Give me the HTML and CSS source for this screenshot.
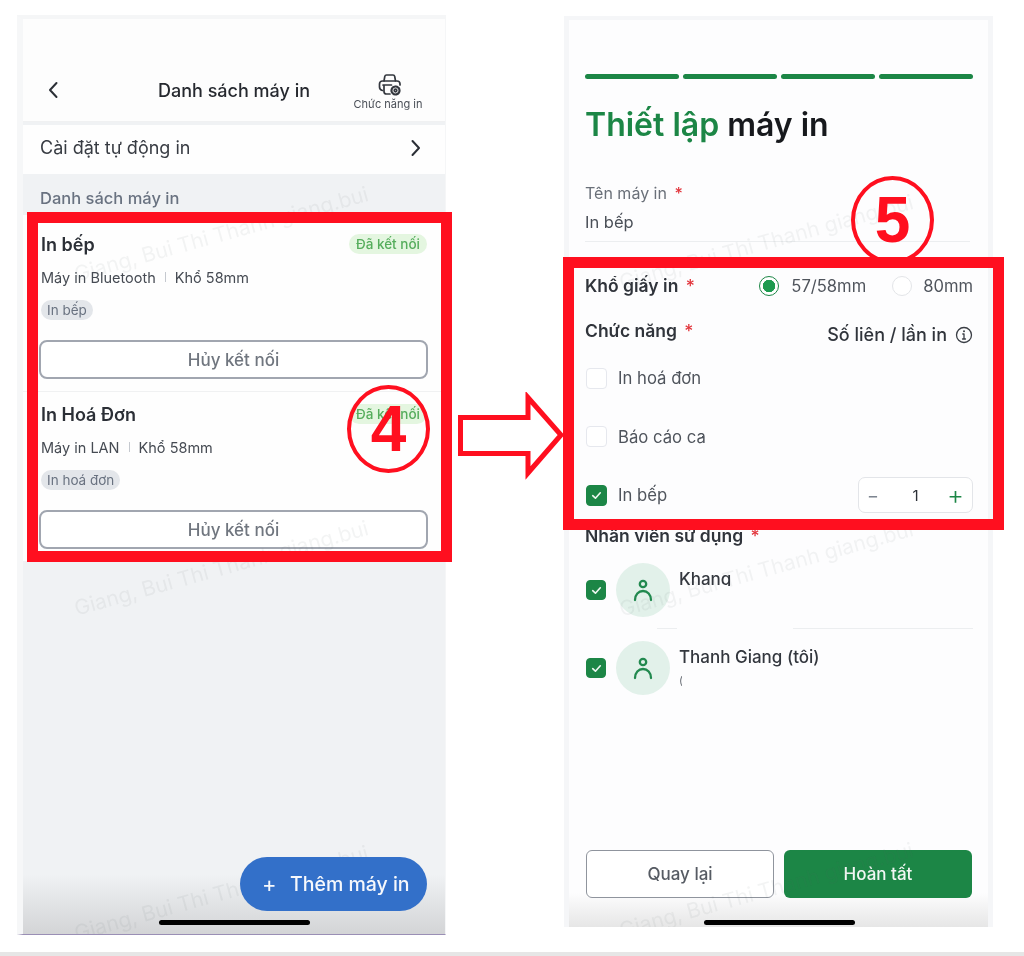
FILE: index.html
```html
<!DOCTYPE html>
<html lang="vi">
<head>
<meta charset="utf-8">
<title>Thiết lập máy in</title>
<link rel="stylesheet" href="styles.css">
</head>
<body>
<main class="stage">
  <section class="phone phone-left">
    <header class="topbar">
      <svg class="back" viewBox="0 0 12 18"><path d="M9.5 2 3 9l6.5 7"/></svg>
      <h1 class="topbar-title">Danh sách máy in</h1>
      <div class="topbar-action">
        <svg class="printer" viewBox="0 0 24 24"><path d="M6 8 6.800 3.400C7 2.500 7.600 2 8.500 2h6.500c.9 0 1.500.5 1.700 1.400L17.500 8"/><path d="M4.500 17.500C2.700 17 1.500 15.800 1.500 14v-3C1.500 9.200 2.700 8 4.500 8h14.500c1.800 0 3 1.200 3 3v1"/><path d="M5 12h8.500M6 12v6.500C6 20.200 7 21 8.500 21H12"/><circle cx="17.500" cy="17.500" r="4" class="gear"/><circle cx="17.500" cy="17.500" r="1.300"/></svg>
        <span>Chức năng in</span>
      </div>
    </header>
    <div class="auto-row">
      <span>Cài đặt tự động in</span>
      <svg class="next" viewBox="0 0 12 18"><path d="M2.500 2 9 9l-6.500 7"/></svg>
    </div>
    <div class="list-label">Danh sách máy in</div>
    <div class="cards">
      <article class="card card-line">
        <div class="card-head"><h2>In bếp</h2><span class="badge">Đã kết nối</span></div>
        <p class="meta"><span>Máy in Bluetooth</span><i></i><span>Khổ 58mm</span></p>
        <span class="pill">In bếp</span>
        <button class="btn-disconnect">Hủy kết nối</button>
      </article>
      <article class="card">
        <div class="card-head"><h2>In Hoá Đơn</h2><span class="badge">Đã kết nối</span></div>
        <p class="meta"><span>Máy in LAN</span><i></i><span>Khổ 58mm</span></p>
        <span class="pill">In hoá đơn</span>
        <button class="btn-disconnect">Hủy kết nối</button>
      </article>
    </div>
    <div class="shade shade-left"></div>
    <span class="mark mark-l1">Giang, Bui Thi Thanh giang.bui</span>
    <span class="mark mark-l2">Giang, Bui Thi Thanh giang.bui</span>
    <span class="mark mark-l3">Giang, Bui Thi Thanh giang.bui</span>
    <button class="fab"><span class="fab-plus">+</span>Thêm máy in</button>
    <div class="home home-left"></div>
  </section>

  <section class="phone phone-right">
    <div class="form">
      <div class="steps"><b></b><b></b><b></b><b></b></div>
      <h1 class="form-title"><em>Thiết lập</em> máy in</h1>
      <label class="field-label">Tên máy in <u>*</u></label>
      <div class="field-value">In bếp</div>
      <div class="paper-row">
        <span class="strong-label">Khổ giấy in <u>*</u></span>
        <div class="radios">
          <span class="radio radio-on"></span><span class="radio-text">57/58mm</span>
          <span class="radio"></span><span class="radio-text">80mm</span>
        </div>
      </div>
      <div class="func-head">
        <span class="strong-label">Chức năng <u>*</u></span>
        <span class="copies">Số liên / lần in
          <svg class="info" viewBox="0 0 18 18"><circle cx="9" cy="9" r="7.500"/><path d="M9 8v5M7.500 13h3M7.800 8H9"/><circle class="dot" cx="9" cy="5.200" r="1"/></svg>
        </span>
      </div>
      <div class="func-list">
        <div class="func"><span class="check"></span><span>In hoá đơn</span></div>
        <div class="func"><span class="check"></span><span>Báo cáo ca</span></div>
        <div class="func">
          <span class="check check-on"><svg viewBox="0 0 12 12"><path d="M2.500 6.200 5 8.500l4.500-5"/></svg></span>
          <span>In bếp</span>
          <div class="stepper"><span class="minus">−</span><span class="qty">1</span><span class="plus">+</span></div>
        </div>
      </div>
      <div class="strong-label staff-label">Nhân viên sử dụng <u>*</u></div>
      <div class="staff staff-first">
        <span class="check check-on"><svg viewBox="0 0 12 12"><path d="M2.500 6.200 5 8.500l4.500-5"/></svg></span>
        <span class="avatar"><svg viewBox="0 0 24 24"><circle cx="12" cy="6" r="3.200"/><path d="M4 22c0-5.500 3.500-9 8-9s8 3.500 8 9"/></svg></span>
        <div class="staff-body staff-line"><div class="staff-name">Khang</div><div class="patch"></div></div>
      </div>
      <div class="staff">
        <span class="check check-on"><svg viewBox="0 0 12 12"><path d="M2.500 6.200 5 8.500l4.500-5"/></svg></span>
        <span class="avatar"><svg viewBox="0 0 24 24"><circle cx="12" cy="6" r="3.200"/><path d="M4 22c0-5.500 3.500-9 8-9s8 3.500 8 9"/></svg></span>
        <div class="staff-body"><div class="staff-name">Thanh Giang (tôi)</div><div class="staff-sub">(</div></div>
      </div>
    </div>
    <div class="shade shade-right"></div>
    <div class="actions">
      <button class="btn-back">Quay lại</button>
      <button class="btn-done">Hoàn tất</button>
    </div>
    <span class="mark mark-r1">Giang, Bui Thi Thanh giang.bui</span>
    <span class="mark mark-r2">Giang, Bui Thi Thanh giang.bui</span>
    <span class="mark mark-r3">Giang, Bui Thi Thanh giang.bui</span>
    <div class="home home-right"></div>
  </section>

  <div class="circle circle-four">4</div>
  <div class="circle circle-five">5</div>
  <div class="red-box box-four"></div>
  <div class="red-box box-five"></div>
  <svg class="arrow" viewBox="0 0 110 90"><path d="M3.500 25.500H71V5.500L104 43 71 81V61.500H3.500Z"/></svg>
</main>
<footer class="page-foot"></footer>
</body>
</html>
```
FILE: styles.css
```css
* { box-sizing: border-box; }
html, body { margin: 0; padding: 0; }
body { width: 1024px; height: 956px; background: #fff; font-family: Inter, "Noto Sans", sans-serif; color: #2b2f36; overflow: hidden; }
h1, h2, p { margin: 0; }
u { text-decoration: none; color: #e2353c; font-weight: 500; margin-left: 3px; }
em { font-style: normal; }
button { font-family: inherit; cursor: pointer; }

.stage { position: relative; height: 952px; display: flex; align-items: flex-start; }
.page-foot { height: 4px; background: #e6e6e6; }

.phone { position: relative; overflow: hidden; display: flex; flex-direction: column; width: 429px; filter: blur(0.6px); }
.phone-left { margin: 15px 0 0 17px; height: 920px; background: #f0f2f4; border-top: 4px solid #f5f6f7; border-left: 6px solid #f6f7f8; border-right: 1px solid #f5f6f7; border-bottom: 1px solid #9a8fb5; }
.phone-right { margin: 16px 0 0 118px; height: 911px; background: #fdfdfe; border-top: 4px solid #f5f6f8; border-left: 5px solid #f5f6f8; border-right: 5px solid #f5f6f8; }

.topbar { height: 103px; flex: none; background: #fdfdfd; display: flex; align-items: flex-end; padding: 0 22px 10px 24px; border-bottom: 1px solid #f0f1f2; position: relative; }
.back { width: 12px; height: 18px; margin: 0 0 12px; flex: none; }
.back path, .next path { fill: none; stroke: #2b2f36; stroke-width: 2; stroke-linecap: round; stroke-linejoin: round; }
.topbar-title { font-size: 18px; font-weight: 500; line-height: 22px; margin: 0 0 9px 99px; white-space: nowrap; color: #26292f; flex: none; }
.topbar-action { margin-left: auto; display: flex; flex-direction: column; align-items: center; gap: 1px; font-size: 11px; line-height: 13px; color: #4a4f57; width: 70px; flex: none; }
.printer { width: 24px; height: 24px; margin-left: 4px; }
.printer path, .printer circle { fill: none; stroke: #33373e; stroke-width: 1.700; stroke-linecap: round; stroke-linejoin: round; }
.printer .gear { stroke-dasharray: 2 .7; stroke-width: 2.200; }

.auto-row { height: 49px; margin-top: 3px; flex: none; background: #fefefe; display: flex; align-items: center; justify-content: space-between; padding: 0 23px 4px 17px; font-size: 18px; color: #383c43; }
.next { width: 12px; height: 18px; }
.list-label { height: 41px; flex: none; padding: 14px 0 0 17px; font-size: 16.500px; line-height: 20px; font-weight: 500; color: #697280; }

.cards { background: #fefefe; padding-top: 7px; flex: none; }
.card { padding: 12px 17px 12px 16px; }
.card-line { border-bottom: 1px solid #f0f1f2; padding-bottom: 12px; }
.card-head { display: flex; justify-content: space-between; align-items: center; height: 20px; padding-left: 2px; }
.card-head h2 { font-size: 18px; font-weight: 600; line-height: 22px; margin-top: 2px; color: #2b2f36; }
.badge { height: 20px; line-height: 20px; padding: 0 7px; margin-right: 1px; border-radius: 10px; background: #e4f6e0; color: #55ad5c; font-size: 13.500px; font-weight: 500; }
.meta { display: flex; align-items: center; height: 20px; margin: 13px 0 0 2px; font-size: 14.500px; color: #464b53; }
.meta i { width: 1px; height: 10px; background: #c5c9cf; margin: 0 9px; }
.pill { display: inline-block; height: 20px; line-height: 20px; margin: 13px 0 0 2px; padding: 0 6px; border-radius: 10px; background: #e3e6ea; color: #697280; font-size: 13.500px; }
.btn-disconnect { display: block; width: 389px; height: 39px; margin-top: 20px; background: #fff; border: 2px solid #a1a6b0; border-radius: 8px; font-size: 17px; font-weight: 500; color: #70767f; }

.shade { position: absolute; left: 0; right: 0; bottom: 0; }
.shade-left { height: 60px; background: linear-gradient(to bottom, rgba(208,209,211,0), #d3d4d6); }
.shade-right { height: 34px; background: linear-gradient(to bottom, rgba(225,225,225,0), #e6e6e6); }

.mark { position: absolute; font-size: 21px; line-height: 24px; white-space: nowrap; color: rgba(90,95,105,.07); transform: rotate(-15.500deg); transform-origin: 0 50%; }
.mark-l1 { left: 52px; top: 244px; }
.mark-l2 { left: 52px; top: 578px; }
.mark-l3 { left: 52px; top: 903px; }
.mark-r1 { left: 51px; top: 251px; }
.mark-r2 { left: 51px; top: 578px; }
.mark-r3 { left: 51px; top: 899px; }

.fab { position: absolute; left: 217px; top: 838px; width: 187px; height: 54px; display: flex; align-items: center; border: 0; border-radius: 27px; background: #3370c9; color: #f6f8fc; font-size: 19.500px; font-weight: 500; padding: 0 0 0 22px; }
.fab-plus { font-size: 22px; font-weight: 400; width: 28px; text-align: left; }
.home { position: absolute; height: 5px; border-radius: 3px; background: #000; width: 151px; }
.home-left { left: 136px; bottom: 9px; }
.home-right { left: 135px; bottom: 2px; }

.form { flex: 1; padding: 54px 15px 0 16px; display: flex; flex-direction: column; }
.steps { display: flex; gap: 4px; height: 5px; flex: none; }
.steps b { flex: 1; border-radius: 3px; background: #1c8646; }
.form-title { font-size: 32px; font-weight: 600; line-height: 36px; margin-top: 28px; color: #17191d; }
.form-title em { color: #1c8646; }
.field-label { font-size: 16px; line-height: 18px; margin-top: 41px; color: #6a7079; }
.field-value { font-size: 16.500px; line-height: 20px; margin-top: 10px; padding-bottom: 9px; margin-right: 3px; border-bottom: 1px solid #eceef0; color: #4a4f57; }
.strong-label { font-size: 17.500px; font-weight: 600; line-height: 22px; color: #30343b; }
.paper-row { display: flex; justify-content: space-between; align-items: center; height: 22px; margin-top: 33px; }
.radios { display: flex; align-items: center; font-size: 16.600px; color: #4f545c; }
.radio { width: 20px; height: 20px; border-radius: 50%; border: 1.500px solid #e3e5e8; background: #fff; margin-right: 12px; position: relative; }
.radio-text { margin-right: 26px; }
.radio-text:last-child { margin-right: 0; margin-left: -1px; }
.radio-on { border: 1.500px solid #1c8646; background: radial-gradient(circle, #1c9a4e 0 6px, #fff 6.500px); }
.func-head { display: flex; justify-content: space-between; align-items: flex-start; height: 22px; margin-top: 23px; }
.copies { display: flex; align-items: center; gap: 8px; font-size: 18px; font-weight: 500; line-height: 22px; margin-top: 4px; color: #30343b; }
.info { width: 18px; height: 18px; }
.info circle, .info path { fill: none; stroke: #3a3e45; stroke-width: 1.300; stroke-linecap: round; }
.info .dot { fill: #3a3e45; stroke: none; }
.func-list { display: flex; flex-direction: column; gap: 22.500px; margin-top: 18px; }
.func { display: flex; align-items: center; height: 36px; font-size: 16.700px; color: #4f545c; padding-left: 1px; }
.check { width: 21px; height: 21px; flex: none; border-radius: 4px; border: 1.500px solid #e6e8ee; background: #fff; margin-right: 11px; display: flex; align-items: center; justify-content: center; }
.check svg { width: 13px; height: 13px; }
.check path { fill: none; stroke: #eef7f1; stroke-width: 1.500; stroke-linecap: round; stroke-linejoin: round; }
.check-on { background: #1c8646; border-color: #1c8646; }
.stepper { margin-left: auto; width: 115px; height: 36px; border: 1px solid #e3e5e9; border-radius: 7px; display: flex; align-items: center; justify-content: space-between; padding: 0 8px 0 8px; background: #fff; }
.minus { color: #7d8590; font-size: 18px; }
.qty { color: #2b2f36; font-size: 15px; margin-left: 5px; }
.plus { color: #1c8646; font-size: 26px; font-weight: 300; line-height: 24px; }
.staff-label { margin-top: 12px; flex: none; }
.staff { display: flex; align-items: flex-start; margin-top: 13px; }
.staff-first { margin-top: 16px; }
.staff .check { margin: 17px 10px 0 1px; width: 20px; height: 20px; }
.avatar { width: 54px; height: 54px; flex: none; border-radius: 50%; background: #e2f1ea; display: flex; align-items: center; justify-content: center; }
.avatar svg { width: 24px; height: 24px; }
.avatar circle, .avatar path { fill: none; stroke: #22894f; stroke-width: 2.300; stroke-linecap: round; }
.staff-body { position: relative; margin-left: -13px; padding: 6px 0 0 22px; flex: 1; height: 54px; }
.staff-line { height: 66px; border-bottom: 1px solid #eceef0; margin-bottom: -1px; }
.staff-name { font-size: 17px; font-weight: 500; line-height: 20px; color: #33373e; white-space: nowrap; }
.staff-sub { font-size: 11px; line-height: 12px; margin-top: 7px; color: #666b73; width: 3px; overflow: hidden; }
.patch { position: absolute; left: 20px; top: 23px; width: 116px; height: 45px; background: #fdfdfe; }

.actions { position: relative; display: flex; gap: 10px; padding: 0 16px 29px 17px; flex: none; }
.actions button { flex: none; width: 188px; height: 48px; border-radius: 6px; font-size: 17px; font-weight: 500; }
.btn-back { background: #fff; border: 1.500px solid #8f949d; color: #565b63; }
.btn-done { background: #1c8646; border: 0; color: #f2f7f4; }

.red-box { position: absolute; border: 11px solid #ff0f1f; }
.box-four { left: 27px; top: 212px; width: 425px; height: 350px; }
.box-five { left: 563px; top: 257px; width: 441px; height: 273px; }
.circle { position: absolute; width: 83px; height: 88px; border-radius: 50%; border: 4.500px solid #ff0f1f; color: #ff0f1f; font-family: "Liberation Sans", sans-serif; font-weight: 700; font-size: 64px; display: flex; align-items: center; justify-content: center; line-height: 1; }
.circle-four { left: 347px; top: 385px; }
.circle-five { left: 851px; top: 176px; }
.arrow { position: absolute; left: 457px; top: 392px; width: 110px; height: 90px; }
.arrow path { fill: #fff; stroke: #ff0f1f; stroke-width: 5; }
```
